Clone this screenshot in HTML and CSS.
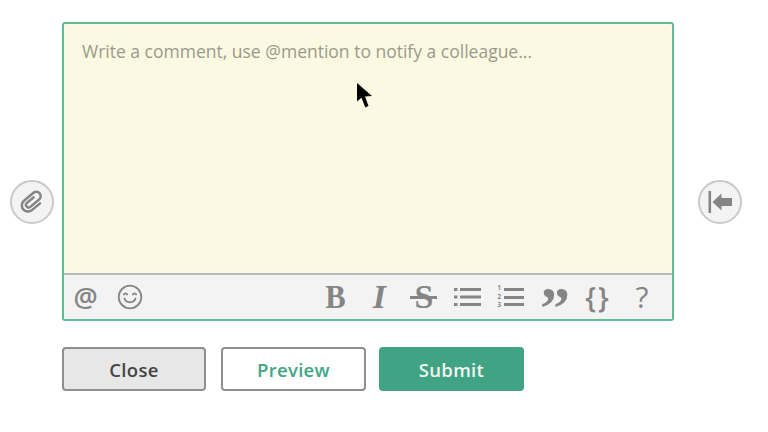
FILE: index.html
```html
<!DOCTYPE html>
<html lang="en">
<head>
  <meta charset="UTF-8">
  <meta name="viewport" content="width=device-width, initial-scale=1.0">
  <title>Comment editor</title>
  <link rel="stylesheet" href="styles.css">
</head>
<body>
  <div class="editor-row">
    <button class="side-button" aria-label="Attach file">
      <svg width="28" height="28" viewBox="0 0 28 28" fill="none" stroke="#858585" stroke-width="2.800" stroke-linecap="round" stroke-linejoin="round">
        <path transform="rotate(50 14 14) translate(2.600 1.700) scale(.88)" d="M10 9 V19 a3 3 0 0 0 6 0 V6 a5 5 0 0 0 -10 0 V20 a7 7 0 0 0 14 0 V8"/>
      </svg>
    </button>

    <div class="editor">
      <div class="editor-text">Write a comment, use @mention to notify a colleague...</div>
      <svg class="cursor" width="18" height="27" viewBox="0 0 18 27">
        <path d="M1 1 L1 19.500 L5.500 15.800 L9.300 25.500 L12.500 24 L9 14.500 L16 14 Z" fill="#000"/>
      </svg>
      <div class="toolbar">
        <div class="toolbar-group">
          <span class="tool tool-at">@</span>
          <svg class="tool-icon" width="26" height="26" viewBox="0 0 26 26" fill="none" stroke="#858585" stroke-width="1.800" stroke-linecap="round">
            <circle cx="13" cy="13" r="11.300"/>
            <path d="M6.800 10.500 C7.500 9 9.500 9 10.200 10.500"/>
            <path d="M15.800 10.500 C16.500 9 18.500 9 19.200 10.500"/>
            <path d="M7.500 14.500 C9 19.500 17 19.500 18.500 14.500"/>
          </svg>
        </div>
        <div class="toolbar-group format-group">
          <span class="tool tool-bold">B</span>
          <span class="tool tool-italic">I</span>
          <span class="tool tool-strike">S</span>
          <svg class="tool-icon tool-bullets" width="27" height="20" viewBox="0 0 27 20" fill="#858585">
            <rect x="0" y="1" width="3.500" height="3"/><rect x="6" y="1" width="21" height="3"/>
            <rect x="0" y="8.500" width="3.500" height="3"/><rect x="6" y="8.500" width="21" height="3"/>
            <rect x="0" y="16" width="3.500" height="3"/><rect x="6" y="16" width="21" height="3"/>
          </svg>
          <div class="number-list">
            <div class="number-col"><span>1</span><span>2</span><span>3</span></div>
            <div class="number-lines"><i></i><i></i><i></i></div>
          </div>
          <span class="tool tool-quote">”</span>
          <span class="tool tool-code">{}</span>
          <span class="tool tool-help">?</span>
        </div>
      </div>
    </div>

    <button class="side-button" aria-label="Collapse">
      <svg width="28" height="28" viewBox="0 0 28 28" fill="#858585">
        <rect x="2.500" y="3" width="2.600" height="22"/>
        <path d="M6.500 14 L15.500 5.500 L15.500 10 L26 10 L26 18 L15.500 18 L15.500 22.500 Z"/>
      </svg>
    </button>
  </div>

  <div class="actions">
    <button class="btn btn-close">Close</button>
    <button class="btn btn-preview">Preview</button>
    <button class="btn btn-submit">Submit</button>
  </div>
</body>
</html>
```

FILE: styles.css
```css
body {
  margin: 0;
  padding: 0;
  overflow: hidden;
  background: #fff;
  width: 768px;
  height: 432px;
  font-family: "Open Sans", "Noto Sans", sans-serif;
}

.editor-row {
  display: flex;
  align-items: flex-start;
  padding: 22px 0 0 10px;
}

.side-button {
  display: flex;
  align-items: center;
  justify-content: center;
  width: 44px;
  height: 44px;
  margin-top: 158px;
  padding: 0;
  background: #f3f3f3;
  border: 2px solid #c9c9c9;
  border-radius: 50%;
}

.editor {
  position: relative;
  box-sizing: border-box;
  width: 612px;
  height: 299px;
  margin: 0 24px 0 8px;
  display: flex;
  flex-direction: column;
  background: #fbf9e1;
  border: 2px solid #5fbd93;
  border-radius: 3px;
}

.editor-text {
  flex: 1;
  padding: 16px 18px;
  font-size: 17.5px;
  line-height: 22px;
  color: #9a9a8c;
}

.cursor {
  position: absolute;
  top: 58px;
  left: 292px;
}

.toolbar {
  display: flex;
  align-items: center;
  justify-content: space-between;
  height: 44px;
  padding: 0 22px 0 9px;
  background: #f3f3f3;
  border-top: 2px solid #b9b9b9;
  color: #858585;
}

.toolbar-group {
  display: flex;
  align-items: center;
  gap: 19px;
}

.format-group {
  gap: 0;
}

.tool {
  display: block;
  text-align: center;
  line-height: 30px;
}

.tool-at {
  font-size: 27px;
  font-weight: 600;
  width: 25px;
}

.tool-bold,
.tool-italic,
.tool-strike {
  font-family: "Liberation Serif", serif;
  font-size: 34px;
  font-weight: 700;
}

.tool-bold {
  width: 23px;
  transform: scaleX(.9);
}

.tool-italic {
  font-style: italic;
  width: 14px;
  margin-left: 25px;
}

.tool-strike {
  width: 27px;
  position: relative;
  margin-left: 24px;
}

.tool-strike::after {
  content: "";
  position: absolute;
  left: 0;
  right: 0;
  top: 14px;
  height: 3px;
  background: #858585;
}

.tool-bullets {
  margin-left: 17px;
}

.number-list {
  display: flex;
  align-items: center;
  gap: 3px;
  margin-left: 16px;
}

.number-col {
  display: flex;
  flex-direction: column;
  font-size: 6.2px;
  font-weight: 700;
  line-height: 8.5px;
}

.number-lines {
  display: flex;
  flex-direction: column;
  gap: 4.500px;
}

.number-lines i {
  display: block;
  width: 20px;
  height: 3px;
  background: #858585;
}

.tool-quote {
  font-family: "Liberation Serif", serif;
  font-size: 60px;
  font-weight: 700;
  width: 27px;
  height: 30px;
  line-height: 52px;
  margin-left: 16px;
}

.tool-code {
  font-size: 28px;
  font-weight: 600;
  letter-spacing: 2px;
  width: 26px;
  margin-left: 18px;
}

.tool-help {
  font-size: 30px;
  width: 16px;
  margin-left: 23px;
}

.actions {
  display: flex;
  gap: 15px;
  padding: 26px 0 0 62px;
}

.btn {
  box-sizing: border-box;
  width: 145px;
  height: 44px;
  padding: 0;
  border-radius: 4px;
  font-family: inherit;
  font-size: 18.5px;
  font-weight: 600;
  letter-spacing: .3px;
}

.btn-close {
  width: 144px;
  background: #e7e7e7;
  border: 2px solid #8f8f8f;
  color: #444;
}

.btn-preview {
  background: #fff;
  border: 2px solid #8f8f8f;
  color: #41a585;
}

.btn-submit {
  margin-left: -2px;
  background: #3fa384;
  border: none;
  color: #f4f4f0;
}
```
